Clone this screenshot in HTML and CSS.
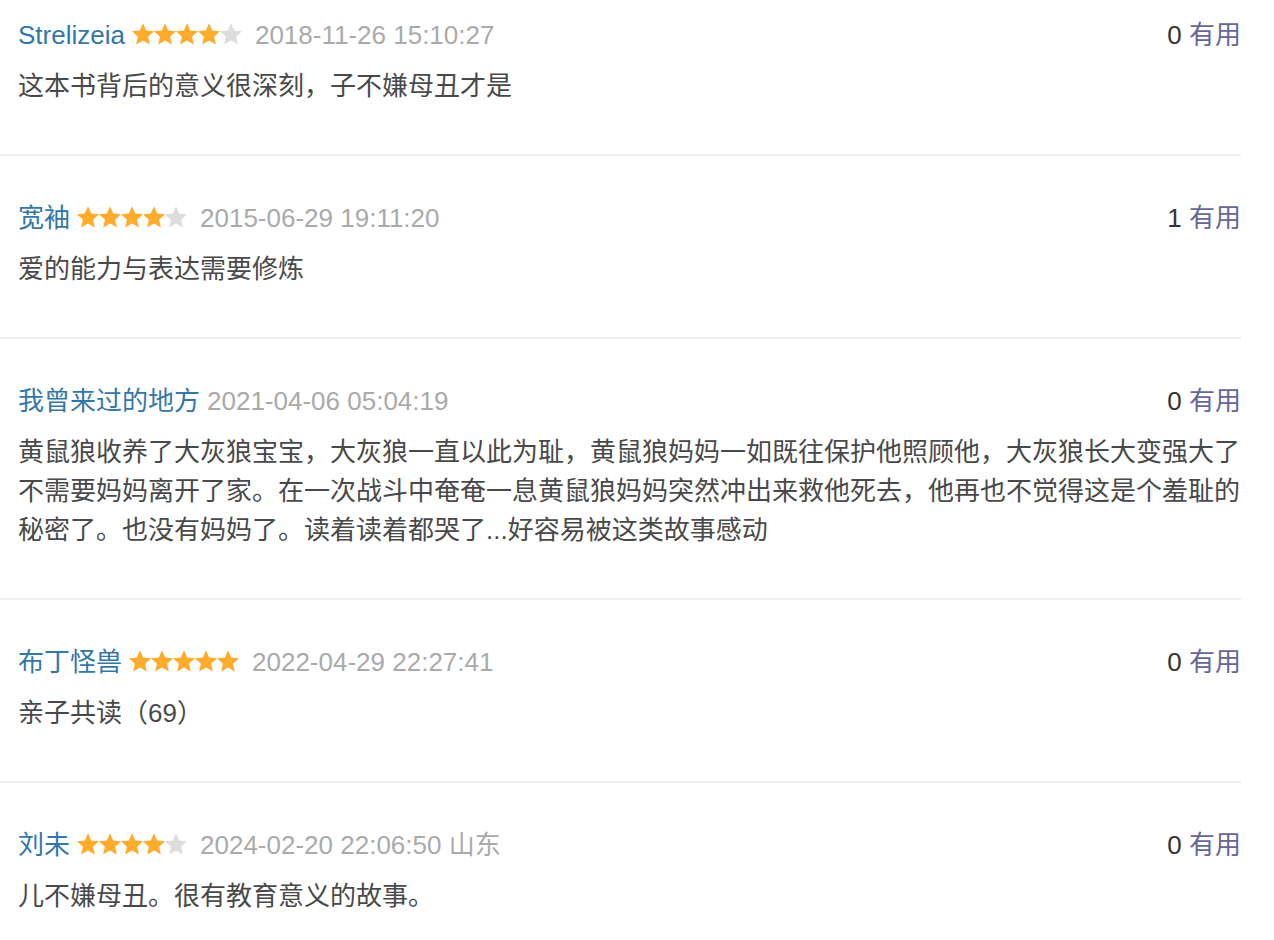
FILE: index.html
```html
<!DOCTYPE html>
<html lang="zh-CN">
<head>
<meta charset="utf-8">
<title>短评</title>
<link rel="stylesheet" href="styles.css">
</head>
<body>
<svg class="defs" width="0" height="0" aria-hidden="true">
  <defs>
    <symbol id="star" viewBox="0 0 22 22">
      <polygon points="11,0.3 14.2,7.6 22,8.35 16.1,13.65 17.85,21.5 11,17.4 4.15,21.5 5.9,13.65 0,8.35 7.8,7.6"/>
    </symbol>
  </defs>
</svg>
<ul class="comments">
  <li class="item">
    <div class="head">
      <div class="info"><a class="user">Strelizeia</a><svg class="stars" width="110" height="22" viewBox="0 0 110 22"><use href="#star" x="0" width="22" height="22" class="on"/><use href="#star" x="22" width="22" height="22" class="on"/><use href="#star" x="44" width="22" height="22" class="on"/><use href="#star" x="66" width="22" height="22" class="on"/><use href="#star" x="88" width="22" height="22" class="off"/></svg><span class="time">2018-11-26 15:10:27</span></div>
      <div class="vote"><span class="count">0</span> <a class="useful">有用</a></div>
    </div>
    <p class="text">这本书背后的意义很深刻，子不嫌母丑才是</p>
  </li>
  <li class="item">
    <div class="head">
      <div class="info"><a class="user">宽袖</a><svg class="stars" width="110" height="22" viewBox="0 0 110 22"><use href="#star" x="0" width="22" height="22" class="on"/><use href="#star" x="22" width="22" height="22" class="on"/><use href="#star" x="44" width="22" height="22" class="on"/><use href="#star" x="66" width="22" height="22" class="on"/><use href="#star" x="88" width="22" height="22" class="off"/></svg><span class="time">2015-06-29 19:11:20</span></div>
      <div class="vote"><span class="count">1</span> <a class="useful">有用</a></div>
    </div>
    <p class="text">爱的能力与表达需要修炼</p>
  </li>
  <li class="item">
    <div class="head">
      <div class="info"><a class="user">我曾来过的地方</a><span class="time">2021-04-06 05:04:19</span></div>
      <div class="vote"><span class="count">0</span> <a class="useful">有用</a></div>
    </div>
    <p class="text">黄鼠狼收养了大灰狼宝宝，大灰狼一直以此为耻，黄鼠狼妈妈一如既往保护他照顾他，大灰狼长大变强大了不需要妈妈离开了家。在一次战斗中奄奄一息黄鼠狼妈妈突然冲出来救他死去，他再也不觉得这是个羞耻的秘密了。也没有妈妈了。读着读着都哭了...好容易被这类故事感动</p>
  </li>
  <li class="item">
    <div class="head">
      <div class="info"><a class="user">布丁怪兽</a><svg class="stars" width="110" height="22" viewBox="0 0 110 22"><use href="#star" x="0" width="22" height="22" class="on"/><use href="#star" x="22" width="22" height="22" class="on"/><use href="#star" x="44" width="22" height="22" class="on"/><use href="#star" x="66" width="22" height="22" class="on"/><use href="#star" x="88" width="22" height="22" class="on"/></svg><span class="time">2022-04-29 22:27:41</span></div>
      <div class="vote"><span class="count">0</span> <a class="useful">有用</a></div>
    </div>
    <p class="text">亲子共读（69）</p>
  </li>
  <li class="item">
    <div class="head">
      <div class="info"><a class="user">刘未</a><svg class="stars" width="110" height="22" viewBox="0 0 110 22"><use href="#star" x="0" width="22" height="22" class="on"/><use href="#star" x="22" width="22" height="22" class="on"/><use href="#star" x="44" width="22" height="22" class="on"/><use href="#star" x="66" width="22" height="22" class="on"/><use href="#star" x="88" width="22" height="22" class="off"/></svg><span class="time">2024-02-20 22:06:50 山东</span></div>
      <div class="vote"><span class="count">0</span> <a class="useful">有用</a></div>
    </div>
    <p class="text">儿不嫌母丑。很有教育意义的故事。</p>
  </li>
</ul>
</body>
</html>
```

FILE: styles.css
```css
html, body {
  margin: 0;
  padding: 0;
  background: #fff;
}

body {
  font-family: "Liberation Sans", "Noto Sans CJK SC", sans-serif;
  font-size: 26px;
  line-height: 39px;
  color: #494949;
}

.defs {
  position: absolute;
  width: 0;
  height: 0;
  overflow: hidden;
}

.comments {
  list-style: none;
  margin: 0;
  padding: 0;
  width: 1241px;
}

.item {
  padding: 43px 0 48px 18px;
  border-top: 2px solid #eeeeee;
}

.item:first-child {
  padding-top: 16px;
  border-top: 0;
}

.head {
  display: flex;
  justify-content: space-between;
  align-items: flex-start;
  height: 39px;
}

.info {
  white-space: nowrap;
}

.user {
  color: #3377aa;
  margin-right: 7px;
}

.stars {
  display: inline-block;
  vertical-align: -1px;
  margin-right: 13px;
}

.stars .on {
  fill: #ffac2d;
}

.stars .off {
  fill: #dddddd;
}

.time {
  color: #aaaaaa;
}

.vote {
  white-space: nowrap;
}

.count {
  color: #333333;
}

.useful {
  color: #666699;
}

.text {
  margin: 12px 0 0;
}
```
